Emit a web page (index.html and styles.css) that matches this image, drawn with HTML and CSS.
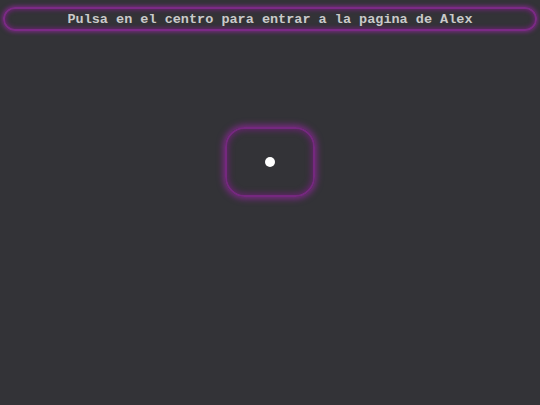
FILE: index.html
```html
<!DOCTYPE html>
<html>
<head>
<meta charset="utf-8">
<link rel="stylesheet" href="styles.css">
</head>
<body>
<div class="page">
  <div class="banner">Pulsa en el centro para entrar a la pagina de Alex</div>
  <div class="stage">
    <div class="box"><span class="dot"></span></div>
  </div>
</div>
</body>
</html>
```
FILE: styles.css
```css
html, body {
  margin: 0;
  padding: 0;
  background: #333337;
  height: 100%;
}
.page {
  padding: 7px 3px 0 3px;
  display: flex;
  flex-direction: column;
  align-items: stretch;
}
.banner {
  height: 20px;
  border: 2px solid #7b2a85;
  border-radius: 12px;
  box-shadow: 0 0 4px 1px #7b2a85, inset 0 0 4px 1px #6a2472;
  color: #cacaca;
  font-family: "Courier New", "Liberation Mono", monospace;
  font-weight: bold;
  font-size: 13.5px;
  line-height: 21px;
  text-align: center;
}
.stage {
  display: flex;
  justify-content: center;
  padding-top: 96px;
}
.box {
  width: 86px;
  height: 66px;
  border: 2px solid #75287f;
  border-radius: 20px;
  box-shadow: 0 0 6px 2px #7b2a85, inset 0 0 6px 1px #6a2472;
  display: flex;
  align-items: center;
  justify-content: center;
}
.dot {
  width: 10px;
  height: 10px;
  border-radius: 50%;
  background: #ffffff;
}
```
